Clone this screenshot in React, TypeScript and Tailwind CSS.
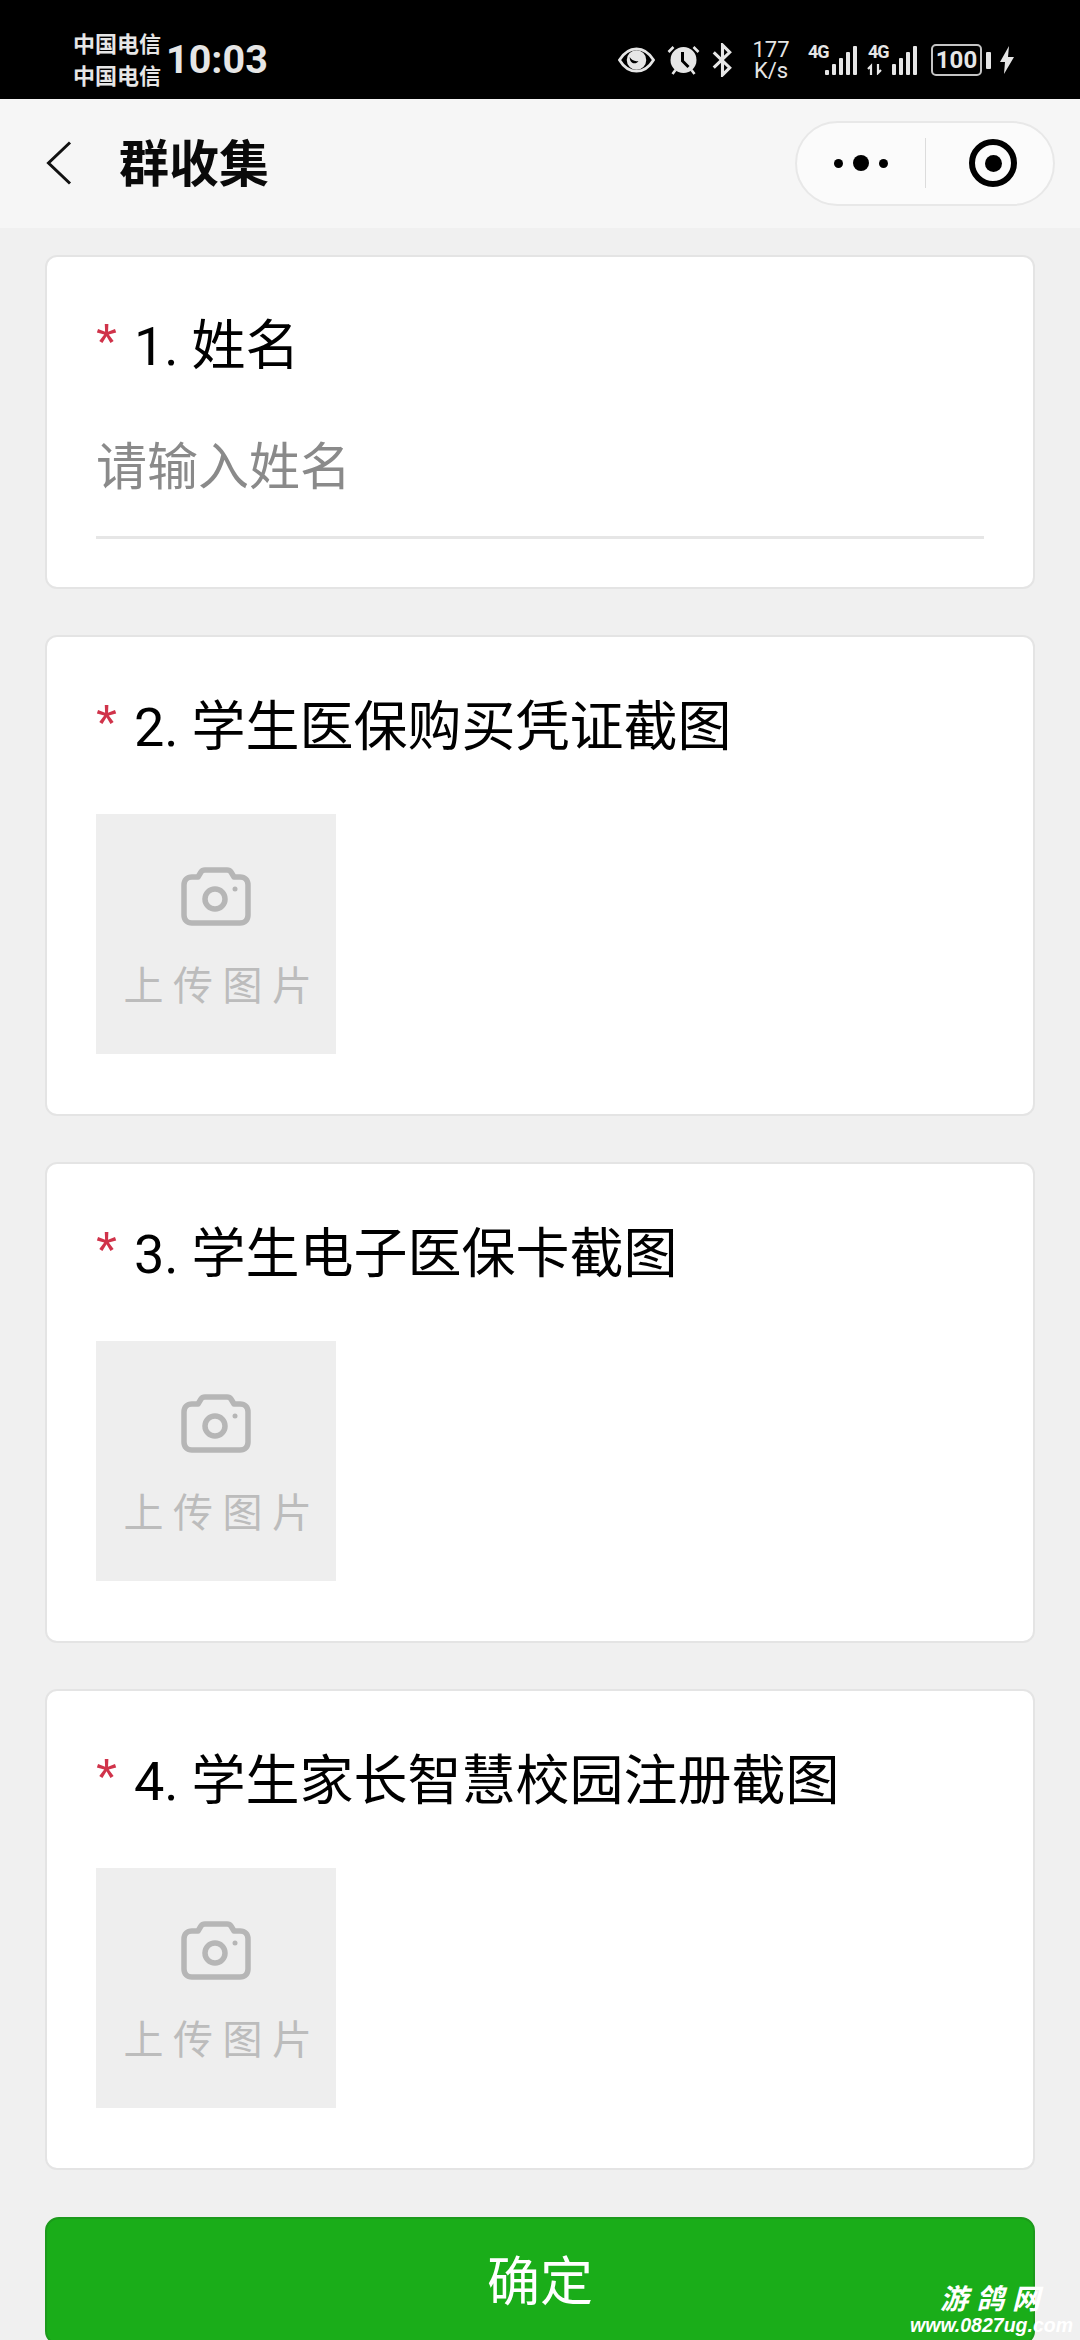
import React from 'react';

const CJK = "font-['Roboto','Noto_Sans_CJK_SC',sans-serif]";

const uploads = [
  { no: 2, title: '学生医保购买凭证截图' },
  { no: 3, title: '学生电子医保卡截图' },
  { no: 4, title: '学生家长智慧校园注册截图' },
];

const signalBars = [
  { x: 18, h: 5 },
  { x: 25, h: 11 },
  { x: 32, h: 17 },
  { x: 39, h: 23 },
  { x: 46, h: 29 },
];

const Eye = () => (
  <svg width="37" height="26" viewBox="0 0 38 26" className="shrink-0">
    <path d="M1.5 13C6 5.500 12 1.500 19 1.500S32 5.500 36.500 13C32 20.500 26 24.500 19 24.500S6 20.500 1.500 13Z" fill="none" stroke="#e6e6e6" strokeWidth="2.8" />
    <circle cx="19" cy="13" r="10" fill="#e6e6e6" />
    <path d="M12 10c2 3 5 5 9 4-1 2-4 3-6 2s-3-3-3-6Z" fill="#000" />
  </svg>
);

const Alarm = () => (
  <svg width="33" height="30" viewBox="0 0 32 30" className="shrink-0">
    <circle cx="16" cy="15" r="13" fill="#e6e6e6" />
    <path d="M15 7v9l6 6" fill="none" stroke="#000" strokeWidth="3" />
    <path d="M1 7l5-5M31 7l-5-5M5 29l3-4M27 29l-3-4" stroke="#e6e6e6" strokeWidth="2.6" />
  </svg>
);

const Bluetooth = () => (
  <svg width="21" height="34" viewBox="0 0 20 33" className="shrink-0">
    <path d="M1.500 9l15.500 15-7 7V2l7 7L1.500 24" fill="none" stroke="#e6e6e6" strokeWidth="3" />
  </svg>
);

const Signal = ({ arrows }: { arrows?: boolean }) => (
  <div className="relative w-[51px] h-[30px] shrink-0">
    <span className="absolute left-[1px] top-[-2px] text-[18px] leading-[18px] font-bold tracking-[-1px] font-['Roboto',sans-serif]">4G</span>
    <svg width="51" height="30" viewBox="0 0 51 30" className="absolute left-0 top-0">
      {arrows && <path d="M4 30v-9l-3 3M11 19v9l3-3" fill="none" stroke="#e6e6e6" strokeWidth="2.2" />}
      {signalBars.filter(b => !arrows || b.x > 18).map(b => (
        <rect key={b.x} x={b.x} y={30 - b.h} width="4" height={b.h} rx="1" fill="#e6e6e6" />
      ))}
    </svg>
  </div>
);

const Camera = () => (
  <svg width="70" height="59" viewBox="0 0 70 59" className="shrink-0">
    <path
      d="M17 10l3-5c1-1.500 2-2 4-2h22c2 0 3 .5 4 2l3 5h6c5 0 8 3 8 8v30c0 5-3 8-8 8H11c-5 0-8-3-8-8V18c0-5 3-8 8-8Z"
      fill="none"
      stroke="#b6b6b6"
      strokeWidth="5.500"
      strokeLinejoin="round"
    />
    <circle cx="34" cy="32" r="10" fill="none" stroke="#b6b6b6" strokeWidth="5.500" />
    <circle cx="54" cy="22" r="2.500" fill="#b6b6b6" />
  </svg>
);

const FieldTitle = ({ no, title }: { no: number; title: string }) => (
  <div className={`flex items-center h-[70px] pt-[8px] text-[54px] text-black ${CJK}`}>
    <span className="w-[38px] self-start text-[54px] leading-[54px] text-[#d0334a] font-['Liberation_Sans',sans-serif]">*</span>
    <span className="whitespace-nowrap">
      {no}.<span className="ml-[13px]">{title}</span>
    </span>
  </div>
);

const StatusBar = () => (
  <div className="h-[99px] bg-black flex items-center text-[#e6e6e6] pl-[73px]">
    <div className="flex flex-col text-[22px] leading-[32px] font-bold font-['Noto_Sans_CJK_SC',sans-serif] pt-[17px]">
      <span>中国电信</span>
      <span>中国电信</span>
    </div>
    <span className="ml-[5px] pt-[21px] text-[39.500px] leading-[40px] font-bold font-['Roboto',sans-serif]">10:03</span>
    <div className="ml-auto mr-[66px] pt-[21px] flex items-center">
      <Eye />
      <div className="ml-[12px]"><Alarm /></div>
      <div className="ml-[12px]"><Bluetooth /></div>
      <div className="ml-[19px] w-[38px] flex flex-col items-center text-[22px] leading-[21px] font-['Roboto',sans-serif]">
        <span>177</span>
        <span>K/s</span>
      </div>
      <div className="ml-[17px]"><Signal /></div>
      <div className="ml-[9px]"><Signal arrows /></div>
      <div className="ml-[13px] w-[51px] h-[32px] rounded-[5px] border-2 border-[#c4c4c4] flex items-center justify-center text-[24px] font-bold font-['Roboto',sans-serif]">100</div>
      <div className="ml-[4px] w-[5px] h-[17px] rounded-[1px] bg-[#e6e6e6]" />
      <svg width="14" height="28" viewBox="0 0 14 28" className="ml-[9px] shrink-0">
        <path d="M9 0L0 16h5l-1 12 10-17H8Z" fill="#e6e6e6" />
      </svg>
    </div>
  </div>
);

const NavBar = () => (
  <div className="h-[129px] bg-[#f6f6f6] flex items-center pl-[46px] pr-[25px]">
    <svg width="26" height="44" viewBox="0 0 26 44" className="shrink-0 mt-[-1px]">
      <path d="M24 1.500L2.500 22 24 42.500" fill="none" stroke="#111" strokeWidth="3" />
    </svg>
    <span className="ml-[47px] mt-[-6px] text-[50px] font-bold text-[#0a0a0a] font-['Noto_Sans_CJK_SC',sans-serif]">群收集</span>
    <div className="ml-auto w-[260px] h-[85px] mt-[-1px] rounded-full bg-[#fbfbfb] border-2 border-[#e8e8e8] flex items-center">
      <div className="w-[128px] flex items-center justify-center gap-[10px]">
        <span className="w-[9px] h-[9px] rounded-full bg-black" />
        <span className="w-[16px] h-[16px] rounded-full bg-black" />
        <span className="w-[9px] h-[9px] rounded-full bg-black" />
      </div>
      <div className="w-[1px] h-[50px] bg-[#dcdcdc]" />
      <div className="ml-[43px] w-[48px] h-[48px] rounded-full border-[6px] border-black flex items-center justify-center">
        <span className="w-[17px] h-[17px] rounded-full bg-black" />
      </div>
    </div>
  </div>
);

const NameCard = () => (
  <section className="h-[334px] bg-white rounded-[12px] border-2 border-[#e4e4e4] pt-[50px] px-[49px]">
    <FieldTitle no={1} title="姓名" />
    <div className="mt-[46px] pb-[33px] border-b-[3px] border-[#e6e6e6]">
      <input
        readOnly
        placeholder="请输入姓名"
        className="block w-full h-[80px] text-[51px] outline-none bg-transparent placeholder:text-[#8a8a8a] font-['Noto_Sans_CJK_SC',sans-serif]"
      />
    </div>
  </section>
);

const UploadCard = ({ no, title }: { no: number; title: string }) => (
  <section className="h-[481px] bg-white rounded-[12px] border-2 border-[#e4e4e4] pt-[51px] px-[49px]">
    <FieldTitle no={no} title={title} />
    <div className="mt-[56px] w-[240px] h-[240px] bg-[#eeeeee] flex flex-col items-center pt-[53px]">
      <Camera />
      <span className="mt-[31px] ml-[13px] text-[40px] leading-[52px] tracking-[9.500px] text-[#bcbcbc] whitespace-nowrap font-['Noto_Sans_CJK_SC',sans-serif]">上传图片</span>
    </div>
  </section>
);

export default function App() {
  return (
    <div className="relative w-[1080px] h-[2340px] overflow-hidden bg-[#f0f0f0]">
      <StatusBar />
      <NavBar />
      <main className="px-[45px] pt-[27px] flex flex-col gap-[46px]">
        <NameCard />
        {uploads.map(u => (
          <UploadCard key={u.no} no={u.no} title={u.title} />
        ))}
        <button className="mt-[1px] h-[128px] pb-[4px] rounded-[14px] bg-[#1aad19] border-2 border-[#1c9a1c] text-white text-[53px] font-['Noto_Sans_CJK_SC',sans-serif]">
          确定
        </button>
      </main>
      {/* site stamp in the bottom corner */}
      <div className="absolute right-[7px] bottom-[3px] flex flex-col items-end text-white italic font-bold">
        <span className="mr-[25px] text-[28px] leading-[32px] tracking-[8px] font-['Noto_Sans_CJK_SC',sans-serif]">游鸽网</span>
        <span className="text-[19.500px] leading-[24px] font-['Liberation_Sans',sans-serif]">www.0827ug.com</span>
      </div>
    </div>
  );
}
